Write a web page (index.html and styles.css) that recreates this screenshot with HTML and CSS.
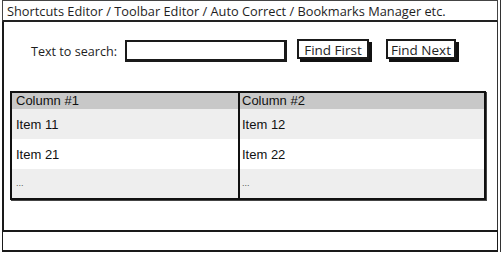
FILE: index.html
```html
<!DOCTYPE html>
<html>
<head>
<meta charset="utf-8">
<link rel="stylesheet" href="styles.css">
</head>
<body>
<div class="window">
  <div class="titlebar">Shortcuts Editor / Toolbar Editor / Auto Correct / Bookmarks Manager etc.</div>
  <div class="main">
    <div class="search">
      <span class="label">Text to search:</span>
      <div class="input"></div>
      <div class="btn">Find First</div>
      <div class="btn next">Find Next</div>
    </div>
    <div class="grid">
      <div class="cell head c1">Column #1</div>
      <div class="cell head c2">Column #2</div>
      <div class="cell odd c1">Item 11</div>
      <div class="cell odd c2">Item 12</div>
      <div class="cell c1">Item 21</div>
      <div class="cell c2">Item 22</div>
      <div class="cell odd last c1 dots">...</div>
      <div class="cell odd last c2 dots">...</div>
    </div>
  </div>
  <div class="status"></div>
</div>
</body>
</html>
```

FILE: styles.css
```css
html, body {
  margin: 0;
  padding: 0;
  background: #fff;
}
.window {
  margin-left: 2px;
  width: 496px;
  height: 252px;
  display: flex;
  flex-direction: column;
  box-shadow: 2px 0 0 #fff, 3px 0 0 #333;
}
.titlebar {
  box-sizing: border-box;
  height: 22px;
  border: 1px solid #444;
  border-bottom: 2px solid #222;
  padding-left: 4px;
  font-family: "Open Sans", sans-serif;
  font-size: 12.8px;
  line-height: 20px;
  color: #1e1e1e;
  white-space: nowrap;
  overflow: hidden;
}
.main {
  box-sizing: border-box;
  height: 208px;
  border-left: 2px solid #1a1a1a;
  border-right: 1px solid #333;
  padding-top: 17px;
  padding-left: 6px;
}
.search {
  display: flex;
  align-items: flex-start;
  padding-left: 21px;
}
.label {
  font-family: "Open Sans", sans-serif;
  font-size: 12.6px;
  color: #1e1e1e;
  line-height: 20px;
  margin-top: 3px;
  margin-right: 8px;
}
.input {
  box-sizing: border-box;
  width: 162px;
  height: 22px;
  margin-top: 1px;
  border: 2px solid #1a1a1a;
  border-right-width: 3px;
  border-bottom-width: 3px;
  margin-right: 10px;
}
.btn {
  box-sizing: border-box;
  width: 72px;
  height: 20px;
  border: 2px solid #1a1a1a;
  box-shadow: 3px 3px 0 #111;
  font-family: "Open Sans", sans-serif;
  font-size: 13.5px;
  line-height: 18px;
  text-align: center;
  color: #1e1e1e;
}
.btn.next {
  margin-left: 17px;
  width: 70px;
}
.grid {
  box-sizing: border-box;
  margin-top: 29px;
  width: 476px;
  display: grid;
  grid-template-columns: 228px 1fr;
  grid-template-rows: 16px 30px 30px 29px;
  border: 2px solid #111;
  box-shadow: 1px 1px 0 #444;
}
.cell {
  font-family: "Liberation Sans", Arial, sans-serif;
  font-size: 13px;
  color: #111;
  display: flex;
  align-items: center;
  white-space: nowrap;
}
.c1 {
  padding-left: 4px;
  border-right: 2px solid #111;
}
.c2 {
  padding-left: 2px;
}
.head {
  background: #c8c8c8;
  line-height: 16px;
}
.odd {
  background: #eeeeee;
}
.dots {
  font-size: 9px;
  color: #555;
  padding-bottom: 1px;
}
.status {
  box-sizing: border-box;
  height: 22px;
  border: 2px solid #1a1a1a;
  border-left-width: 1px;
  border-right-width: 1px;
}
```
